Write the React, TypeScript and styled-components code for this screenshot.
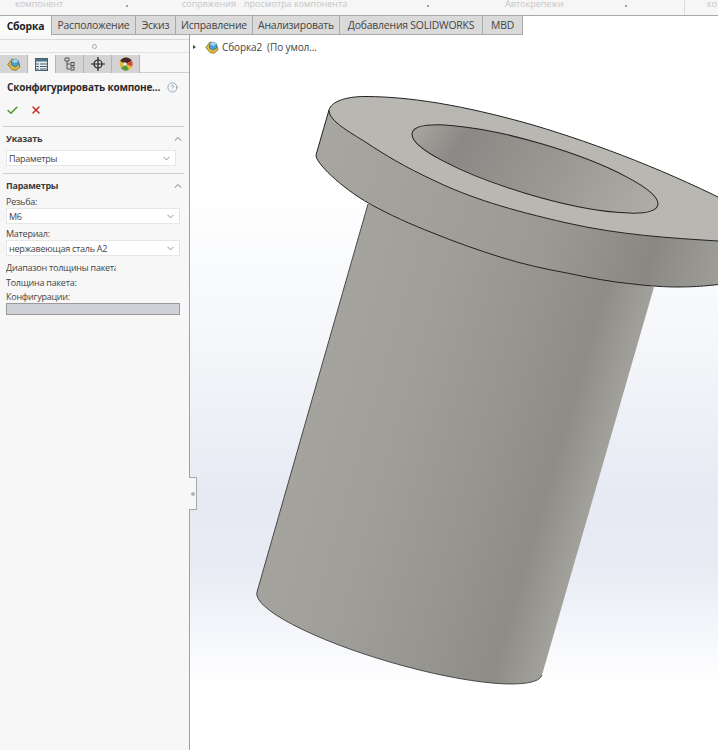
import React from "react";
import styled, { createGlobalStyle } from "styled-components";
import { Check, ChevronDown, ChevronUp, X, CircleHelp } from "lucide-react";

const Global = createGlobalStyle`
  html, body { margin: 0; padding: 0; background: #fff; }
  body { font-family: "Open Sans", "Noto Sans", "Liberation Sans", sans-serif; color: #333; }
`;

const Page = styled.div`
  width: 718px;
  height: 750px;
  overflow: hidden;
  display: flex;
  flex-direction: column;
`;

const Ribbon = styled.div`
  height: 16px;
  box-sizing: border-box;
  background: #f6f6f6;
  border-bottom: 1px solid #a9a9a9;
  display: flex;
  font-size: 9px;
  color: #c6c6c6;
  line-height: 7px;
`;

const RibbonLabel = styled.span<{ $w: number }>`
  width: ${(p) => p.$w}px;
  flex: none;
  white-space: nowrap;
`;

const RibbonCaret = styled.span<{ $w: number }>`
  width: ${(p) => p.$w}px;
  flex: none;
  &::before {
    content: "";
    display: block;
    width: 2px;
    height: 2px;
    margin-top: 5px;
    background: #a0a0a0;
  }
`;

const RibbonDivider = styled.span`
  width: 23px;
  flex: none;
  border-left: 1px solid #dcdcdc;
  box-sizing: border-box;
`;

const TabBar = styled.div`
  height: 19px;
  display: flex;
  background: #fff;
`;

const Tab = styled.div<{ $w: number; $active?: boolean }>`
  width: ${(p) => p.$w}px;
  height: 19px;
  flex: none;
  display: flex;
  align-items: center;
  justify-content: center;
  font-size: 10.4px;
  letter-spacing: -0.2px;
  white-space: nowrap;
  box-sizing: border-box;
  color: ${(p) => (p.$active ? "#222" : "#444")};
  font-weight: ${(p) => (p.$active ? 700 : 400)};
  background: ${(p) => (p.$active ? "#fafafa" : "#dadada")};
  border-right: 1px solid #a8a8a8;
  border-bottom: ${(p) => (p.$active ? "none" : "1px solid #a8a8a8")};
`;

const Body = styled.div`
  flex: 1;
  display: flex;
  min-height: 0;
`;

const Panel = styled.div`
  width: 190px;
  flex: none;
  box-sizing: border-box;
  background: #f7f7f7;
  border-right: 1px solid #a0a0a0;
  display: flex;
  flex-direction: column;
  font-size: 9px;
  letter-spacing: -0.25px;
`;

const Grip = styled.div`
  height: 14px;
  box-sizing: border-box;
  margin: 4px 0 2px;
  border-top: 1px solid #d9d9d9;
  border-bottom: 1px solid #e2e2e2;
  display: flex;
  align-items: center;
  justify-content: center;
  &::after {
    content: "";
    width: 3px;
    height: 3px;
    border-radius: 50%;
    border: 1px solid #aaa;
  }
`;

const IconTabs = styled.div`
  height: 18px;
  box-sizing: border-box;
  display: flex;
  border-bottom: 1px solid #cfcfcf;
`;

const IconTab = styled.div<{ $active?: boolean }>`
  width: 28px;
  height: 18px;
  display: flex;
  align-items: center;
  justify-content: center;
  background: ${(p) => (p.$active ? "#f7f7f7" : "#d4d4d4")};
  border-right: 1px solid #b5b5b5;
  box-sizing: border-box;
`;

const Title = styled.div`
  display: flex;
  align-items: center;
  height: 28px;
  padding: 0 11px 0 7px;
  font-size: 10px;
  font-weight: 700;
  letter-spacing: -0.2px;
  color: #2c2c2c;
  justify-content: space-between;
  white-space: nowrap;
  svg { color: #6c87a8; }
`;

const Actions = styled.div`
  display: flex;
  gap: 11px;
  padding: 0 6px;
  height: 18px;
  margin-bottom: 7px;
  align-items: center;
`;

const Section = styled.div`
  border-top: 1px solid #cfcfcf;
  margin: 0 5px 0 3px;
  padding-left: 3px;
`;

const SectionHead = styled.div`
  height: 23px;
  display: flex;
  align-items: center;
  justify-content: space-between;
  font-weight: 700;
  color: #3c3c3c;
  svg { color: #777; }
`;

const Select = styled.div<{ $w: number; $gap?: number }>`
  width: ${(p) => p.$w}px;
  height: 16px;
  margin-bottom: ${(p) => p.$gap ?? 0}px;
  box-sizing: border-box;
  background: #fff;
  border: 1px solid #e6e6e6;
  display: flex;
  align-items: center;
  justify-content: space-between;
  padding: 0 3px 0 2px;
  color: #444;
  svg { color: #888; }
`;

const Field = styled.div<{ $h: number; $clip?: boolean }>`
  color: #444;
  height: ${(p) => p.$h}px;
  line-height: ${(p) => p.$h}px;
  white-space: nowrap;
  width: ${(p) => (p.$clip ? "110px" : "auto")};
  overflow: ${(p) => (p.$clip ? "hidden" : "visible")};
`;

const List = styled.div`
  width: 174px;
  height: 12px;
  background: #cfd2d6;
  border: 1px solid #9a9a9a;
  box-sizing: border-box;
`;

const ParamBody = styled.div`
  display: flex;
  flex-direction: column;
  margin-top: -2px;
`;

const View = styled.div`
  flex: 1;
  position: relative;
  background: linear-gradient(180deg, #fff 0, #fff 150px, #f5f7fa 300px, #e7eaf3 460px, #e8ebf3 530px, #f3f5fa 590px, #fff 650px);
`;

const Tree = styled.div`
  position: absolute;
  left: 3px;
  top: 5px;
  display: flex;
  align-items: center;
  gap: 3px;
  font-size: 10px;
  letter-spacing: -0.1px;
  color: #444;
  white-space: nowrap;
`;

const Arrow = styled.span`
  width: 0;
  height: 0;
  border-left: 3px solid #444;
  border-top: 2.5px solid transparent;
  border-bottom: 2.5px solid transparent;
  margin-right: 6px;
`;

const Handle = styled.div`
  position: absolute;
  left: -1px;
  top: 442px;
  width: 8px;
  height: 33px;
  box-sizing: border-box;
  background: #f7f7f7;
  border: 1px solid #a8a8a8;
  border-left: none;
  display: flex;
  align-items: center;
  justify-content: center;
  &::after {
    content: "";
    width: 4px;
    height: 4px;
    border-radius: 50%;
    background: #b5b5b5;
  }
`;

const Model = styled.svg`
  position: absolute;
  left: -190px;
  top: -35px;
`;

const PartIcon = () => (
  <svg width="14" height="14" viewBox="0 0 14 14">
    <path d="M.8 7.500 3.500 4 5 2l3 1 4 3 1 4-4 3.300-4-.8z" fill="#e0bb3e" stroke="#7d6a22" strokeWidth=".8" />
    <path d="M8 2l3.700 1.900v4L8 10 4.500 8V4z" fill="#4b9fd2" stroke="#2c6c96" strokeWidth=".7" />
    <path d="M8 2l3.700 1.900L8 6 4.500 4z" fill="#a5d4ee" />
  </svg>
);

const ListIcon = () => (
  <svg width="13" height="13" viewBox="0 0 13 13">
    <rect x=".5" y=".5" width="12" height="12" fill="#e8eef2" stroke="#44606f" />
    <rect x="1" y="1" width="11" height="2.500" fill="#4f7487" />
    <path d="M1 6h3M5 6h7M1 8.500h3M5 8.500h7M1 11h3M5 11h7" stroke="#44606f" strokeWidth="1.100" />
  </svg>
);

const TreeIcon = () => (
  <svg width="13" height="14" viewBox="0 0 13 14" fill="none" stroke="#555" strokeWidth="1">
    <path d="M2 1h4v3H2zM4 4v8h3M4 7h3" />
    <rect x="8" y="5.500" width="3" height="3" />
    <rect x="8" y="10" width="3" height="3" />
  </svg>
);

const CrossIcon = () => (
  <svg width="14" height="14" viewBox="0 0 14 14" fill="none" stroke="#222" strokeWidth="1.200">
    <circle cx="7" cy="7" r="4" />
    <path d="M7 0v14M0 7h14" />
  </svg>
);

const ColorIcon = () => (
  <svg width="14" height="14" viewBox="0 0 14 14">
    <circle cx="7" cy="7" r="6.500" fill="#e3b93a" />
    <path d="M7 7 1.200 4A6.500 6.500 0 0 1 12.600 3.700z" fill="#4a2626" />
    <path d="M7 7 2 11.200A6.500 6.500 0 0 0 9.500 13z" fill="#4f9a3f" />
    <path d="M7 7 12.600 3.700A6.500 6.500 0 0 1 13 9.500z" fill="#d8483a" />
    <circle cx="6" cy="7" r="1.800" fill="#eee" />
  </svg>
);

// traced edge of the flange, the perspective keeps it from being a true ellipse
const flangeTop =
  "M329 110 C331 102 345 96.500 365 96.500 C420 96.500 480 110 533 125 C600 145 670 172 740 208 L740 240 L718 241 C670 238 620 235 567 223 C510 210 470 198 433 180 C405 167 385 155 367 143 C348 131 329 121 329 110 Z";
const flangeEdge =
  "M329 110 L316 155 C315 162 340 187 370 204 C390 215 410 224 433 233 C455 242 478 250 500 257 C522 264 545 269 567 273 C590 278 612 282 633 284 C650 286 665 287 677 287 C695 287 708 286 740 282";

export default function App() {
  return (
    <Page>
      <Global />
      <Ribbon>
        <RibbonLabel $w={15} />
        <RibbonLabel $w={111}>компонент</RibbonLabel>
        <RibbonCaret $w={56} />
        <RibbonLabel $w={62}>сопряжения</RibbonLabel>
        <RibbonLabel $w={183}>просмотра компонента</RibbonLabel>
        <RibbonCaret $w={78} />
        <RibbonLabel $w={120}>Автокрепежи</RibbonLabel>
        <RibbonCaret $w={59} />
        <RibbonDivider />
        <RibbonLabel $w={11}>ко</RibbonLabel>
      </Ribbon>
      <TabBar>
        <Tab $w={52} $active>Сборка</Tab>
        <Tab $w={84}>Расположение</Tab>
        <Tab $w={40}>Эскиз</Tab>
        <Tab $w={77}>Исправление</Tab>
        <Tab $w={87}>Анализировать</Tab>
        <Tab $w={143}>Добавления SOLIDWORKS</Tab>
        <Tab $w={40}>MBD</Tab>
      </TabBar>
      <Body>
        <Panel>
          <Grip />
          <IconTabs>
            <IconTab><PartIcon /></IconTab>
            <IconTab $active><ListIcon /></IconTab>
            <IconTab><TreeIcon /></IconTab>
            <IconTab><CrossIcon /></IconTab>
            <IconTab><ColorIcon /></IconTab>
          </IconTabs>
          <Title>
            <span>Сконфигурировать компоне...</span>
            <CircleHelp size={11} strokeWidth={1.5} />
          </Title>
          <Actions>
            <Check size={13} color="#4f9a2f" strokeWidth={3} />
            <X size={12} color="#c8302a" strokeWidth={3} />
          </Actions>
          <Section>
            <SectionHead>Указать<ChevronUp size={12} /></SectionHead>
            <Select $w={170} $gap={7}>Параметры<ChevronDown size={11} /></Select>
          </Section>
          <Section>
            <SectionHead>Параметры<ChevronUp size={12} /></SectionHead>
            <ParamBody>
              <Field $h={13}>Резьба:</Field>
              <Select $w={174} $gap={3}>M6<ChevronDown size={11} /></Select>
              <Field $h={13}>Материал:</Field>
              <Select $w={174} $gap={4}>нержавеющая сталь A2<ChevronDown size={11} /></Select>
              <Field $h={15} $clip>Диапазон толщины пакета</Field>
              <Field $h={15}>Толщина пакета:</Field>
              <Field $h={13}>Конфигурации:</Field>
              <List />
            </ParamBody>
          </Section>
        </Panel>
        <View>
          <Tree>
            <Arrow />
            <PartIcon />
            <span>Сборка2&nbsp; (По умол...</span>
          </Tree>
          <Handle />
          <Model width="718" height="750" viewBox="0 0 718 750">
            <defs>
              <linearGradient id="cyl" gradientUnits="userSpaceOnUse" x1="257" y1="592" x2="542" y2="675">
                <stop offset="0" stopColor="#a5a39d" />
                <stop offset=".3" stopColor="#a09e98" />
                <stop offset=".6" stopColor="#97958f" />
                <stop offset=".84" stopColor="#8e8c87" />
                <stop offset="1" stopColor="#a3a19b" />
              </linearGradient>
              <linearGradient id="rim" gradientUnits="userSpaceOnUse" x1="314" y1="158" x2="735" y2="276">
                <stop offset="0" stopColor="#a8a6a0" />
                <stop offset=".55" stopColor="#9c9a94" />
                <stop offset=".8" stopColor="#8a8883" />
                <stop offset="1" stopColor="#a3a19b" />
              </linearGradient>
              <linearGradient id="bore" gradientUnits="userSpaceOnUse" x1="412" y1="133" x2="658" y2="203">
                <stop offset="0" stopColor="#aaa8a2" />
                <stop offset=".2" stopColor="#8b8985" />
                <stop offset=".6" stopColor="#9b9993" />
                <stop offset="1" stopColor="#b0aea8" />
              </linearGradient>
            </defs>
            <path d="M368 204 L257 592 A148 30 16.2 0 0 542 675 L654 287 Z" fill="url(#cyl)" />
            <path d="M368 204 L257 592 A148 30 16.2 0 0 542 675" fill="none" stroke="#3a3a3a" strokeWidth=".9" />
            <path d={`${flangeEdge} L740 230 Z`} fill="url(#rim)" />
            <path d={flangeEdge} fill="none" stroke="#222" strokeWidth="1" />
            <path d={flangeTop} fill="#b9b7b1" stroke="#222" strokeWidth="1" />
            <ellipse cx="535" cy="169" rx="128" ry="26" transform="rotate(16.500 535 169)" fill="url(#bore)" stroke="#222" strokeWidth="1" />
          </Model>
        </View>
      </Body>
    </Page>
  );
}
